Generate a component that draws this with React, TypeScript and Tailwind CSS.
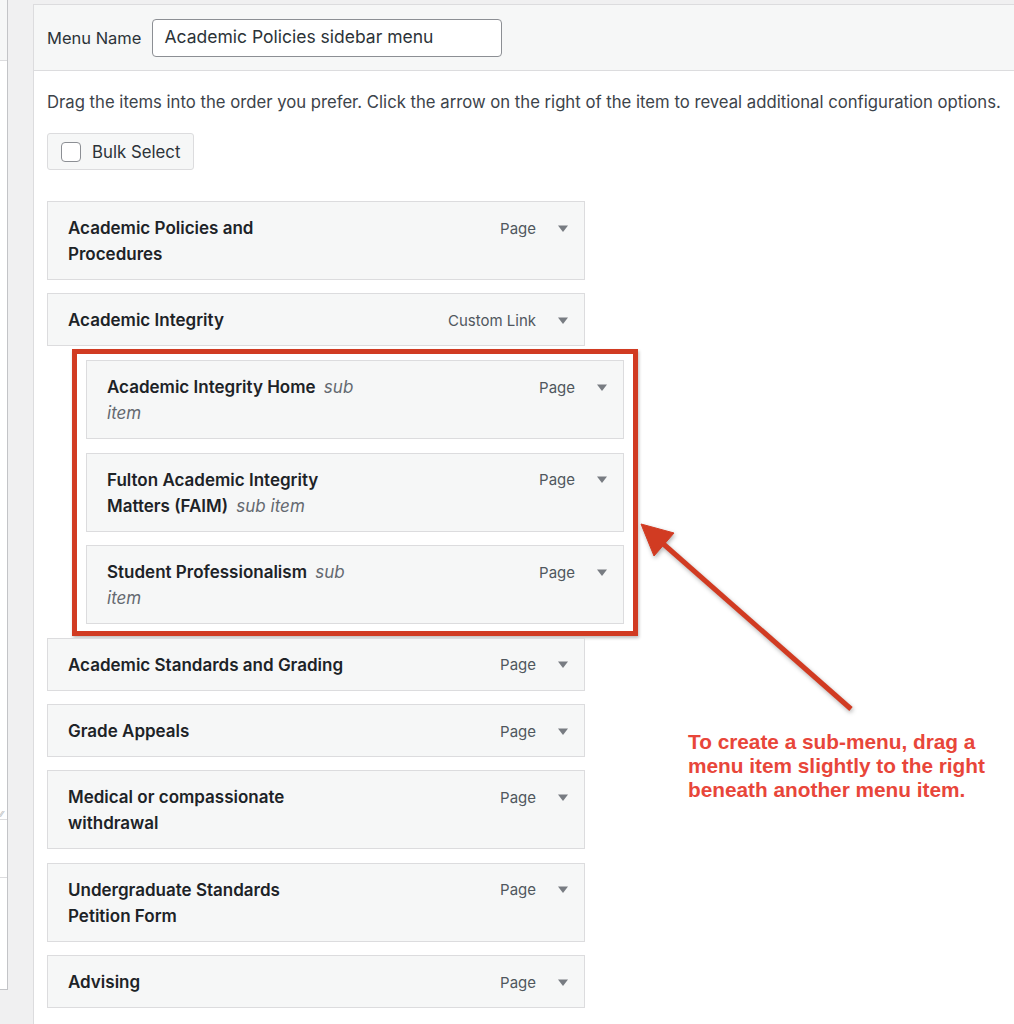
import type { ReactNode } from "react";

type Item = { lines: ReactNode[]; type: string };

const Sub = ({ children }: { children: ReactNode }) => (
  <i className="font-normal text-[#646970]">{children}</i>
);

const topBefore: Item[] = [
  { lines: ["Academic Policies and", "Procedures"], type: "Page" },
  { lines: ["Academic Integrity"], type: "Custom Link" },
];

const subItems: Item[] = [
  {
    lines: [
      <>
        Academic Integrity Home <span className="ml-[4px]"><Sub>sub</Sub></span>
      </>,
      <Sub>item</Sub>,
    ],
    type: "Page",
  },
  {
    lines: [
      "Fulton Academic Integrity",
      <>
        Matters (FAIM) <span className="ml-[4px]"><Sub>sub item</Sub></span>
      </>,
    ],
    type: "Page",
  },
  {
    lines: [
      <>
        Student Professionalism <span className="ml-[4px]"><Sub>sub</Sub></span>
      </>,
      <Sub>item</Sub>,
    ],
    type: "Page",
  },
];

const topAfter: Item[] = [
  { lines: ["Academic Standards and Grading"], type: "Page" },
  { lines: ["Grade Appeals"], type: "Page" },
  { lines: ["Medical or compassionate", "withdrawal"], type: "Page" },
  { lines: ["Undergraduate Standards", "Petition Form"], type: "Page" },
  { lines: ["Advising"], type: "Page" },
];

const DownArrow = () => (
  <svg width="10" height="8" viewBox="0 0 10 8" className="mt-[1px]">
    <path d="M0 0.5h10L5 7z" fill="#787c82" />
  </svg>
);

const MenuItem = ({ item }: { item: Item }) => (
  <div className="flex w-[538px] items-start justify-between border border-[#dcdcde] bg-[#f6f7f7] pb-[12px] pl-[20px] pr-[16px] pt-[13px] leading-[26px]">
    <div className="text-[17px] font-semibold text-[#1d2327]">
      {item.lines.map((l, i) => (
        <div key={i} className="whitespace-nowrap">
          {l}
        </div>
      ))}
    </div>
    <div className="flex h-[26px] items-center gap-[22px]">
      <span className="mt-[1px] text-[15px] text-[#50575e]">{item.type}</span>
      <DownArrow />
    </div>
  </div>
);

const App = () => {
  return (
    <div className="relative flex h-[1024px] w-[1014px] overflow-hidden bg-[#f0f0f1] font-['Inter',sans-serif]">
      {/* left column, mostly cut off */}
      <div className="flex h-[990px] w-[8px] shrink-0 flex-col border-b border-r border-[#c3c4c7] bg-white">
        <div className="h-[61px] border-b border-[#dcdcde] bg-[#f6f7f7]" />
        <div className="relative h-[759px] border-b border-[#dcdcde]">
          <span className="absolute bottom-[1px] left-0 text-[8px] leading-none text-[#a7aaad]">⁄⁄</span>
        </div>
        <div className="h-[58px] border-b border-[#dcdcde]" />
        <div className="h-[56px]" />
      </div>

      {/* menu editor */}
      <div className="ml-[25px] mt-[4px] flex-1 border-l border-t border-[#dcdcde] bg-white">
        <div className="flex h-[66px] items-center border-b border-[#dcdcde] bg-[#f6f7f7] px-[13px]">
          <label className="mt-[1px] text-[16.5px] text-[#2c3338]">Menu Name</label>
          <div className="ml-[11px] flex h-[38px] w-[350px] items-center rounded-[4px] border border-[#8c8f94] bg-white px-[11px] text-[17.5px] text-[#2c3338]">
            Academic Policies sidebar menu
          </div>
        </div>

        <div className="px-[13px] pt-[19px]">
          <p className="whitespace-nowrap text-[16.7px] leading-[24px] text-[#3c434a]">
            Drag the items into the order you prefer. Click the arrow on the right of the item to reveal additional configuration options.
          </p>

          <div className="mt-[19px] flex h-[37px] w-[147px] items-center rounded-[3px] border border-[#dcdcde] bg-[#f6f7f7]">
            <span className="ml-[13px] h-[20px] w-[20px] rounded-[4px] border border-[#8c8f94] bg-white" />
            <span className="ml-[11px] mt-[2px] text-[16.8px] text-[#2c3338]">Bulk Select</span>
          </div>

          <div className="mt-[31px] flex flex-col">
            <div className="flex flex-col gap-[13.4px]">
              {topBefore.map((it, i) => (
                <MenuItem key={i} item={it} />
              ))}
            </div>

            <div className="mb-[2px] ml-[25px] mt-[2.5px] flex w-[566px] flex-col gap-[13.4px] border-[5px] border-[#d13b22] px-[9px] py-[6.5px] shadow-[1px_2px_3px_rgba(0,0,0,0.25)]">
              {subItems.map((it, i) => (
                <MenuItem key={i} item={it} />
              ))}
            </div>

            <div className="flex flex-col gap-[13.4px]">
              {topAfter.map((it, i) => (
                <MenuItem key={i} item={it} />
              ))}
            </div>
          </div>
        </div>
      </div>

      {/* annotation */}
      <svg
        className="pointer-events-none absolute left-0 top-0"
        width="1014"
        height="1024"
        viewBox="0 0 1014 1024"
      >
        <g fill="#d13b22" stroke="#d13b22" style={{ filter: "drop-shadow(1px 2px 2px rgba(0,0,0,0.3))" }}>
          <line x1="660" y1="541" x2="851" y2="709" strokeWidth="5" />
          <polygon points="641,524 674,533 654,556" strokeWidth="1" />
        </g>
      </svg>
      <div className="absolute left-[688px] top-[730px] font-['Liberation_Sans',Arial,sans-serif] text-[20.8px] font-bold leading-[24px] text-[#e8463a]">
        <div>To create a sub-menu, drag a</div>
        <div>menu item slightly to the right</div>
        <div>beneath another menu item.</div>
      </div>
    </div>
  );
};

export default App;
